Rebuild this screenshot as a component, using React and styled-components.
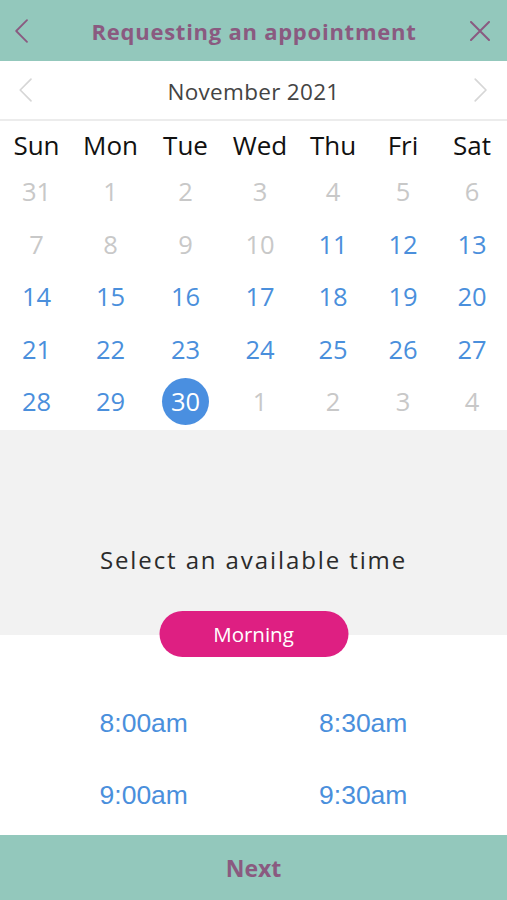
import React from "react";
import styled, { createGlobalStyle } from "styled-components";

const Global = createGlobalStyle`
  html, body { margin: 0; padding: 0; background: #fff; }
  body { font-family: "Open Sans", sans-serif; }
  * { box-sizing: border-box; }
`;

const Page = styled.div`
  width: 507px;
  height: 900px;
  display: flex;
  flex-direction: column;
  overflow: hidden;
`;

const TopBar = styled.header`
  height: 61px;
  background: #93c8bc;
  display: grid;
  grid-template-columns: 44px 1fr 54px;
  align-items: center;
`;

const IconBtn = styled.div`
  display: flex;
  align-items: center;
  justify-content: center;
`;

const Title = styled.h1`
  margin: 0;
  text-align: center;
  font-family: "Open Sans", sans-serif;
  font-weight: 700;
  font-size: 22px;
  letter-spacing: 0.75px;
  color: #8a5a80;
  padding-left: 11px;
`;

const MonthBar = styled.div`
  height: 60px;
  display: grid;
  grid-template-columns: 52px 1fr 52px;
  align-items: center;
  border-bottom: 2px solid #ececec;
`;

const MonthLabel = styled.div`
  text-align: center;
  font-size: 22.5px;
  color: #444;
  letter-spacing: 0.3px;
  padding-top: 3px;
`;

const Grid = styled.div`
  display: grid;
  grid-template-columns: 73px 75px 75px 74px 72px 68px 70px;
  grid-template-rows: 44px;
  grid-auto-rows: 52.5px;
  padding-bottom: 2px;
`;

const DayName = styled.div`
  display: flex;
  align-items: center;
  justify-content: center;
  font-size: 26px;
  color: #111;
  padding-top: 4px;
`;

const DayCell = styled.div`
  display: flex;
  align-items: center;
  justify-content: center;
`;

const DayNum = styled.div`
  width: 47px;
  height: 47px;
  border-radius: 50%;
  display: flex;
  align-items: center;
  justify-content: center;
  font-size: 25.5px;
  color: ${(p) => (p.$selected ? "#fff" : p.$active ? "#4a8fdc" : "#c8c8c8")};
  background: ${(p) => (p.$selected ? "#4a8fe0" : "transparent")};
`;

const TimeSection = styled.section`
  background: #f2f2f2;
  height: 205px;
  display: flex;
  flex-direction: column;
  align-items: center;
  justify-content: flex-end;
  position: relative;
`;

const Prompt = styled.div`
  font-size: 24px;
  letter-spacing: 1.9px;
  color: #2b2b2b;
  margin-bottom: 59px;
`;

const Pill = styled.div`
  position: absolute;
  left: 50%;
  bottom: -22px;
  transform: translateX(-50%);
  width: 189px;
  height: 46px;
  border-radius: 23px;
  background: #de1f82;
  color: #fff;
  font-size: 20.5px;
  display: flex;
  align-items: center;
  justify-content: center;
`;

const Slots = styled.div`
  flex: 1;
  display: grid;
  grid-template-columns: 1fr 1fr;
  grid-auto-rows: 72px;
  padding: 53px 34px 0 34px;
  justify-items: center;
  align-items: center;
  align-content: start;
`;

const Slot = styled.div`
  font-family: "Liberation Sans", Arial, sans-serif;
  font-size: 26.5px;
  color: #4a8fdc;
`;

const Footer = styled.footer`
  height: 65px;
  background: #93c8bc;
  display: flex;
  align-items: center;
  justify-content: center;
  font-weight: 700;
  font-size: 23px;
  color: #8a5a80;
`;

const Chevron = ({ dir = "left", color = "#8a5a80", size = 22, sw = 1.6 }) => (
  <svg width={size * 0.55} height={size} viewBox="0 0 11 20" fill="none">
    <path
      d={dir === "left" ? "M10 1 L1 10 L10 19" : "M1 1 L10 10 L1 19"}
      stroke={color}
      strokeWidth={sw}
      strokeLinecap="round"
      strokeLinejoin="round"
    />
  </svg>
);

const Close = () => (
  <svg width="20" height="20" viewBox="0 0 20 20" fill="none">
    <path d="M1 1 L19 19 M19 1 L1 19" stroke="#8a5a80" strokeWidth="2" strokeLinecap="round" />
  </svg>
);

const names = ["Sun", "Mon", "Tue", "Wed", "Thu", "Fri", "Sat"];
const days = [
  [31, 1, 2, 3, 4, 5, 6],
  [7, 8, 9, 10, 11, 12, 13],
  [14, 15, 16, 17, 18, 19, 20],
  [21, 22, 23, 24, 25, 26, 27],
  [28, 29, 30, 1, 2, 3, 4],
];

export default function App() {
  return (
    <Page>
      <Global />
      <TopBar>
        <IconBtn>
          <Chevron size={24} sw={1.5} />
        </IconBtn>
        <Title>Requesting an appointment</Title>
        <IconBtn>
          <Close />
        </IconBtn>
      </TopBar>
      <MonthBar>
        <IconBtn>
          <Chevron color="#d6d6d6" size={24} sw={1.4} />
        </IconBtn>
        <MonthLabel>November 2021</MonthLabel>
        <IconBtn>
          <Chevron dir="right" color="#d6d6d6" size={24} sw={1.4} />
        </IconBtn>
      </MonthBar>
      <Grid>
        {names.map((n) => (
          <DayName key={n}>{n}</DayName>
        ))}
        {days.map((row, r) =>
          row.map((d, c) => {
            const inMonth = !(r === 0 || (r === 4 && c > 2));
            const active = inMonth && (r > 1 || (r === 1 && c >= 4));
            const selected = r === 4 && d === 30;
            return (
              <DayCell key={`${r}-${c}`}>
                <DayNum $active={active} $selected={selected}>
                  {d}
                </DayNum>
              </DayCell>
            );
          })
        )}
      </Grid>
      <TimeSection>
        <Prompt>Select an available time</Prompt>
        <Pill>Morning</Pill>
      </TimeSection>
      <Slots>
        <Slot>8:00am</Slot>
        <Slot>8:30am</Slot>
        <Slot>9:00am</Slot>
        <Slot>9:30am</Slot>
      </Slots>
      <Footer>Next</Footer>
    </Page>
  );
}
